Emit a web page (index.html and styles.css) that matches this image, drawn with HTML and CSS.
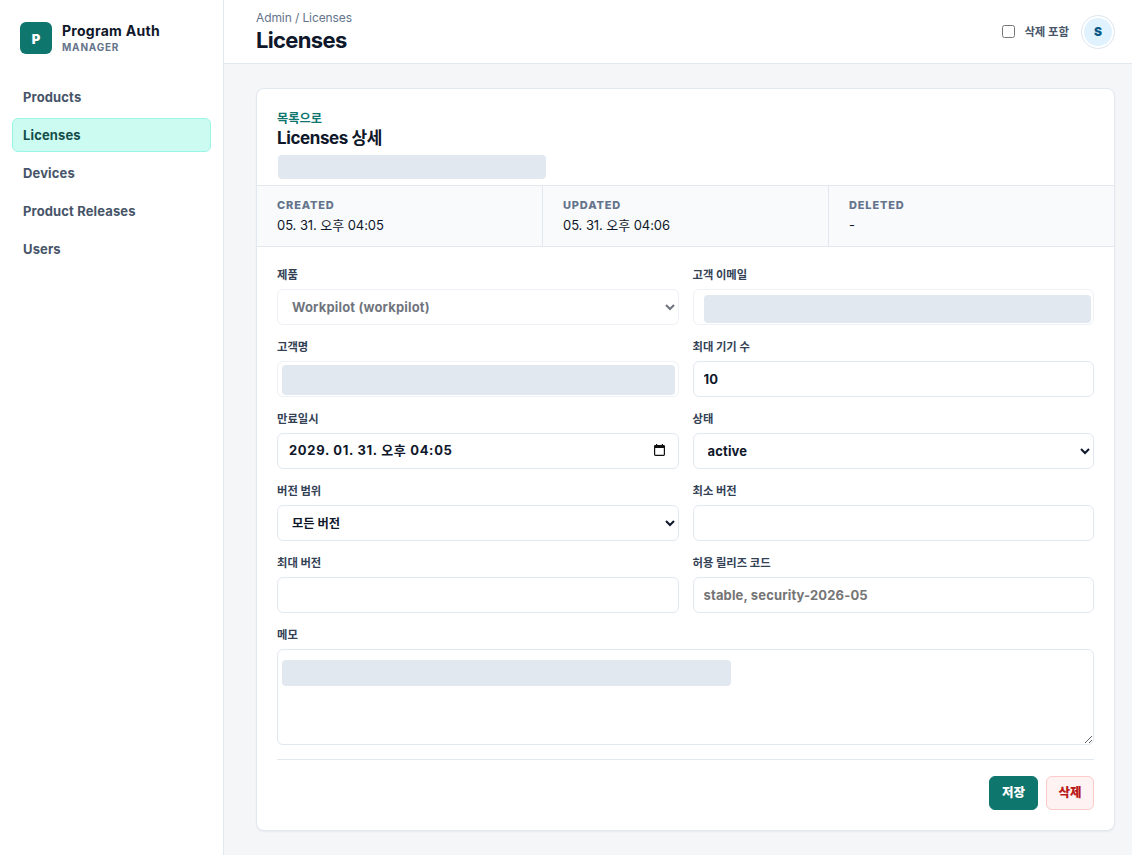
FILE: index.html
```html
<!DOCTYPE html>
<html lang="ko">
<head>
    <meta charset="UTF-8" />
    <meta name="viewport" content="width=device-width, initial-scale=1" />
    <title>Licenses</title>
    <link rel="stylesheet" href="styles.css">
</head>
<body>
    <div class="layout">
        <aside class="sidebar">
            <div class="brand">
                <div class="brand-mark">P</div>
                <div>
                    <div class="brand-name">Program Auth</div>
                    <div class="brand-sub">MANAGER</div>
                </div>
            </div>
            <nav class="nav">
                <a>Products</a>
                <a class="active">Licenses</a>
                <a>Devices</a>
                <a>Product Releases</a>
                <a>Users</a>
            </nav>
        </aside>

        <div class="main">
            <header class="topbar">
                <div>
                    <div class="breadcrumb">Admin / Licenses</div>
                    <h1>Licenses</h1>
                </div>
                <div class="topbar-right">
                    <label class="toggle"><input type="checkbox" /><span>삭제 포함</span></label>
                    <div class="avatar">S</div>
                </div>
            </header>

            <section class="card">
                <div class="card-head">
                    <a class="back">목록으로</a>
                    <h2>Licenses 상세</h2>
                    <div class="mask mask-id"></div>
                </div>

                <div class="meta">
                    <div class="meta-item"><b>CREATED</b><span>05. 31. 오후 04:05</span></div>
                    <div class="meta-item"><b>UPDATED</b><span>05. 31. 오후 04:06</span></div>
                    <div class="meta-item"><b>DELETED</b><span>-</span></div>
                </div>

                <form class="form">
                    <div class="field">
                        <label>제품</label>
                        <select class="control" disabled><option>Workpilot (workpilot)</option></select>
                    </div>
                    <div class="field">
                        <label>고객 이메일</label>
                        <div class="control locked"><div class="mask mask-email"></div></div>
                    </div>
                    <div class="field">
                        <label>고객명</label>
                        <div class="control locked"><div class="mask mask-name"></div></div>
                    </div>
                    <div class="field">
                        <label>최대 기기 수</label>
                        <input class="control" type="text" value="10" />
                    </div>
                    <div class="field">
                        <label>만료일시</label>
                        <div class="control date">
                            <span>2029. 01. 31. 오후 04:05</span>
                            <svg width="11" height="12" viewBox="0 0 11 12">
                                <path d="M2 0h1.2v1h4.6V0H9v1h.8Q11 1 11 2.200V10.600Q11 12 9.600 12H1.400Q0 12 0 10.600V2.200Q0 1 1.200 1H2zM1.200 4v6.800h8.600V4z" fill="#111" fill-rule="evenodd" />
                            </svg>
                        </div>
                    </div>
                    <div class="field">
                        <label>상태</label>
                        <select class="control"><option>active</option></select>
                    </div>
                    <div class="field">
                        <label>버전 범위</label>
                        <select class="control korean"><option>모든 버전</option></select>
                    </div>
                    <div class="field">
                        <label>최소 버전</label>
                        <input class="control" type="text" />
                    </div>
                    <div class="field">
                        <label>최대 버전</label>
                        <input class="control" type="text" />
                    </div>
                    <div class="field">
                        <label>허용 릴리즈 코드</label>
                        <input class="control" type="text" placeholder="stable, security-2026-05" />
                    </div>
                    <div class="field wide">
                        <label>메모</label>
                        <div class="memo">
                            <textarea class="control"></textarea>
                            <div class="mask mask-memo"></div>
                        </div>
                    </div>
                    <div class="actions">
                        <button type="button" class="btn primary">저장</button>
                        <button type="button" class="btn danger">삭제</button>
                    </div>
                </form>
            </section>
        </div>
    </div>
</body>
</html>
```

FILE: styles.css
```css
* {
    box-sizing: border-box;
}

body {
    margin: 0;
    background: #f5f6f8;
    color: #0f172a;
    font-family: Inter, "Noto Sans CJK KR", sans-serif;
    font-size: 13px;
}

h1, h2 {
    margin: 0;
}

.layout {
    display: grid;
    grid-template-columns: 224px 1fr;
    height: 855px;
    overflow: hidden;
}

.sidebar {
    background: #fff;
    border-right: 1px solid #e2e8f0;
    padding: 22px 12px;
}

.brand {
    display: flex;
    align-items: center;
    gap: 10px;
    height: 32px;
    padding: 0 8px;
}

.brand-mark {
    display: grid;
    place-items: center;
    width: 32px;
    height: 32px;
    border-radius: 6px;
    background: #0f766e;
    color: #fff;
    font-weight: 900;
    padding-top: 2px;
}

.brand-name {
    font-size: 14px;
    font-weight: 700;
    line-height: 18px;
    letter-spacing: 0.27px;
}

.brand-sub {
    color: #64748b;
    font-size: 10px;
    font-weight: 700;
    line-height: 14px;
    letter-spacing: 0.8px;
}

.nav {
    display: grid;
    gap: 4px;
    margin-top: 26px;
}

.nav a {
    height: 34px;
    padding: 0 10px;
    border: 1px solid transparent;
    border-radius: 6px;
    color: #475569;
    font-weight: 700;
    line-height: 33px;
    letter-spacing: 0.13px;
}

.nav a.active {
    background: #ccfbf1;
    border-color: #99f6e4;
    color: #134e4a;
}

.topbar {
    display: flex;
    justify-content: space-between;
    align-items: center;
    height: 64px;
    padding: 0 17px 0 32px;
    background: #fff;
    border-bottom: 1px solid #e2e8f0;
}

.breadcrumb {
    color: #64748b;
    font-size: 12px;
    line-height: 16px;
    letter-spacing: -0.1px;
}

h1 {
    font-size: 22px;
    font-weight: 700;
    line-height: 28px;
    letter-spacing: -0.66px;
}

.topbar-right {
    display: flex;
    align-items: center;
    gap: 12px;
}

.toggle {
    display: flex;
    align-items: center;
    gap: 9px;
    color: #475569;
    font-size: 11.400px;
    font-weight: 700;
}

.toggle span {
    padding-bottom: 1px;
}

.toggle input {
    width: 13px;
    height: 13px;
    margin: 0;
}

.avatar {
    display: grid;
    place-items: center;
    width: 34px;
    height: 34px;
    border: 1px solid #e2e8f0;
    border-radius: 50%;
    background: #e0f2fe;
    box-shadow: inset 0 0 0 2px #fff;
    color: #075985;
    font-size: 12px;
    font-weight: 900;
}

.card {
    margin: 24px 17px 0 32px;
    height: 743px;
    background: #fff;
    border: 1px solid #e2e8f0;
    border-radius: 8px;
    box-shadow: 0 1px 2px rgba(15, 23, 42, 0.05);
    overflow: hidden;
}

.card-head {
    height: 96px;
    padding: 21px 20px 0;
}

.back {
    display: block;
    color: #0f766e;
    font-size: 12.200px;
    font-weight: 700;
    line-height: 18px;
}

h2 {
    font-size: 17px;
    font-weight: 700;
    line-height: 21px;
    letter-spacing: -0.4px;
}

.mask {
    background: #e2e8f0;
    border-radius: 4px;
}

.mask-id {
    width: 268px;
    height: 24px;
    margin: 6px 0 0 1px;
}

.meta {
    display: grid;
    grid-template-columns: 286px 286px 1fr;
    height: 62px;
    background: #f8fafc;
    border-top: 1px solid #e2e8f0;
    border-bottom: 1px solid #e2e8f0;
}

.meta-item {
    padding: 12px 20px 0;
    border-right: 1px solid #e2e8f0;
}

.meta-item:last-child {
    border-right: none;
}

.meta-item b {
    display: block;
    color: #64748b;
    font-size: 11px;
    font-weight: 800;
    line-height: 14px;
    letter-spacing: 0.84px;
}

.meta-item span {
    display: block;
    margin-top: 3px;
    line-height: 20px;
    letter-spacing: -0.07px;
}

.form {
    display: grid;
    grid-template-columns: 1fr 1fr;
    gap: 14px;
    padding: 20px;
}

.field {
    display: grid;
    grid-template-rows: 16px auto;
    gap: 6px;
}

.field label {
    color: #334155;
    font-size: 11.300px;
    font-weight: 700;
    line-height: 17px;
}

.control {
    width: 100%;
    height: 36px;
    margin: 0;
    padding: 0 10px;
    border: 1px solid #e2e8f0;
    border-radius: 6px;
    background: #fff;
    color: #0f172a;
    font-family: inherit;
    font-size: 13px;
    font-weight: 700;
    letter-spacing: 0.15px;
}

.control:disabled {
    opacity: 0.6;
}

.korean {
    font-size: 12.300px;
    letter-spacing: 0;
}

.locked {
    padding: 0;
    border-color: #eef1f6;
}

.mask-email {
    width: 387px;
    height: 28px;
    margin: 5px 0 0 10px;
}

.mask-name {
    width: 393px;
    height: 30px;
    margin: 3px 0 0 4px;
}

.date {
    display: flex;
    align-items: center;
    justify-content: space-between;
    padding: 0 13px 2px 11px;
    letter-spacing: 0.68px;
}

.date span {
    padding-bottom: 1px;
}

.wide {
    grid-column: 1 / -1;
}

.memo {
    position: relative;
    height: 96px;
}

.memo textarea {
    display: block;
    height: 96px;
    resize: vertical;
}

/* sits over the textarea content */
.mask-memo {
    position: absolute;
    left: 5px;
    top: 11px;
    width: 449px;
    height: 26px;
}

.actions {
    grid-column: 1 / -1;
    display: flex;
    justify-content: flex-end;
    gap: 8px;
    padding-top: 16px;
    border-top: 1px solid #e2e8f0;
}

.btn {
    height: 34px;
    padding: 0 0 3px;
    border: 1px solid #0f766e;
    border-radius: 6px;
    font-family: inherit;
    font-size: 12.500px;
    font-weight: 800;
    white-space: nowrap;
}

.primary {
    width: 49px;
    background: #0f766e;
    color: #fff;
}

.danger {
    width: 48px;
    background: #fef2f2;
    border-color: #fecaca;
    color: #b91c1c;
}
```
